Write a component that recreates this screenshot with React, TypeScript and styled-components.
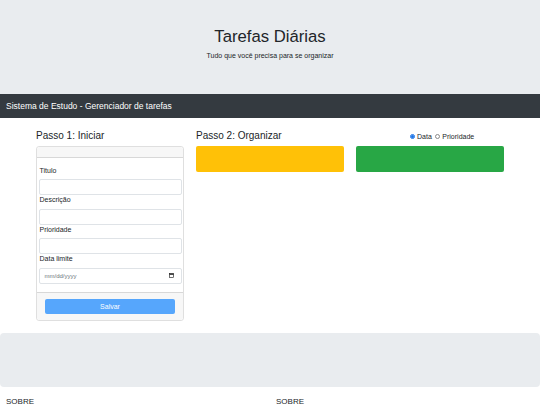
import React from "react";
import styled, { createGlobalStyle } from "styled-components";

const GlobalStyle = createGlobalStyle`
  html, body {
    margin: 0;
    padding: 0;
    background: #fff;
  }
  body {
    font-family: "Liberation Sans", Arial, sans-serif;
    color: #212529;
  }
`;

const Page = styled.div`
  width: 540px;
  min-height: 405px;
  display: flex;
  flex-direction: column;
`;

const Jumbotron = styled.header`
  height: 94px;
  background: #e9ecef;
  display: flex;
  flex-direction: column;
  align-items: center;
  padding-top: 27px;
  box-sizing: border-box;
`;

const Title = styled.h1`
  margin: 0 0 4px;
  font-size: 16.7px;
  line-height: 20px;
  font-weight: 400;
  color: #212529;
`;

const Lead = styled.p`
  margin: 0;
  font-size: 7px;
  line-height: 10px;
  color: #212529;
`;

const Navbar = styled.nav`
  height: 24px;
  background: #343a40;
  color: #fff;
  font-size: 8.5px;
  line-height: 24px;
  padding-left: 6px;
`;

const Main = styled.main`
  display: grid;
  grid-template-columns: repeat(3, 160px);
  padding: 12px 30px 12.5px;
`;

const Column = styled.section`
  padding: 0 6px;
  display: flex;
  flex-direction: column;
`;

const StepTitle = styled.h2`
  margin: 0 0 4px;
  height: 12px;
  font-size: 10px;
  line-height: 12px;
  font-weight: 400;
  white-space: nowrap;
`;

const Card = styled.div`
  border: 1px solid rgba(0, 0, 0, 0.125);
  border-radius: 3px;
  overflow: hidden;
`;

const CardHeader = styled.div`
  height: 10px;
  background: #f7f7f7;
  border-bottom: 1px solid rgba(0, 0, 0, 0.125);
`;

const CardBody = styled.div`
  padding: 8px 1.5px 8.3px;
  display: flex;
  flex-direction: column;
`;

const Label = styled.label`
  font-size: 7px;
  line-height: 10px;
  margin-bottom: 3.4px;
  padding-left: 1px;
`;

const Input = styled.div`
  height: 16px;
  box-sizing: border-box;
  border: 1px solid #dfe3e7;
  border-radius: 2px;
  background: #fff;
  display: flex;
  align-items: center;
  justify-content: space-between;
  padding: 0 7px 0 5px;
`;

const DatePlaceholder = styled.span`
  font-size: 6px;
  color: #6c757d;
`;

const CardFooter = styled.div`
  background: #f7f7f7;
  border-top: 1px solid rgba(0, 0, 0, 0.125);
  padding: 6px 8px;
`;

const Button = styled.button`
  width: 100%;
  height: 15px;
  border: none;
  border-radius: 2px;
  background: #56a6fc;
  color: #fff;
  font-family: "Liberation Sans", Arial, sans-serif;
  font-size: 7px;
  padding: 0;
  display: block;
`;

const Lane = styled.div<{ $color: string }>`
  height: 26px;
  border-radius: 2px;
  background: ${(p) => p.$color};
`;

const RadioRow = styled.div`
  height: 12px;
  margin-bottom: 4px;
  display: flex;
  align-items: center;
  padding-left: 54px;
  font-size: 7px;
`;

const RadioItem = styled.label`
  display: flex;
  align-items: center;
  margin-right: 3.5px;
`;

const RadioDot = styled.span<{ $on?: boolean }>`
  width: 5px;
  height: 5px;
  box-sizing: border-box;
  border-radius: 50%;
  margin-right: 2px;
  border: ${(p) => (p.$on ? "1.3px solid #1a73e8" : "0.6px solid #8a8a8a")};
  background: #fff;
  box-shadow: ${(p) => (p.$on ? "inset 0 0 0 2px #1a73e8" : "none")};
`;

const FooterBand = styled.div`
  height: 54px;
  background: #e9ecef;
  border-radius: 4px;
`;

const Bottom = styled.footer`
  display: grid;
  grid-template-columns: 270px 270px;
  padding-top: 9px;
`;

const About = styled.div`
  padding-left: 6px;
  font-size: 8px;
  line-height: 11px;
`;

const CalendarIcon = () => (
  <svg width="5" height="5" viewBox="0 0 10 10" fill="none">
    <rect x="0.8" y="1.2" width="8.4" height="8" stroke="#222" strokeWidth="1.3" />
    <rect x="0.8" y="1.2" width="8.4" height="2.4" fill="#222" />
  </svg>
);

const fields = ["Titulo", "Descrição", "Prioridade"];

export default function App() {
  return (
    <Page>
      <GlobalStyle />
      <Jumbotron>
        <Title>Tarefas Diárias</Title>
        <Lead>Tudo que você precisa para se organizar</Lead>
      </Jumbotron>
      <Navbar>Sistema de Estudo - Gerenciador de tarefas</Navbar>
      <Main>
        <Column>
          <StepTitle>Passo 1: Iniciar</StepTitle>
          <Card>
            <CardHeader />
            <CardBody>
              {fields.map((f) => (
                <React.Fragment key={f}>
                  <Label>{f}</Label>
                  <Input />
                </React.Fragment>
              ))}
              <Label>Data limite</Label>
              <Input>
                <DatePlaceholder>mm/dd/yyyy</DatePlaceholder>
                <CalendarIcon />
              </Input>
            </CardBody>
            <CardFooter>
              <Button disabled>Salvar</Button>
            </CardFooter>
          </Card>
        </Column>
        <Column>
          <StepTitle>Passo 2: Organizar</StepTitle>
          <Lane $color="#ffc107" />
        </Column>
        <Column>
          <RadioRow>
            <RadioItem>
              <RadioDot $on />
              Data
            </RadioItem>
            <RadioItem>
              <RadioDot />
              Prioridade
            </RadioItem>
          </RadioRow>
          <Lane $color="#28a745" />
        </Column>
      </Main>
      <FooterBand />
      <Bottom>
        <About>SOBRE</About>
        <About>SOBRE</About>
      </Bottom>
    </Page>
  );
}
